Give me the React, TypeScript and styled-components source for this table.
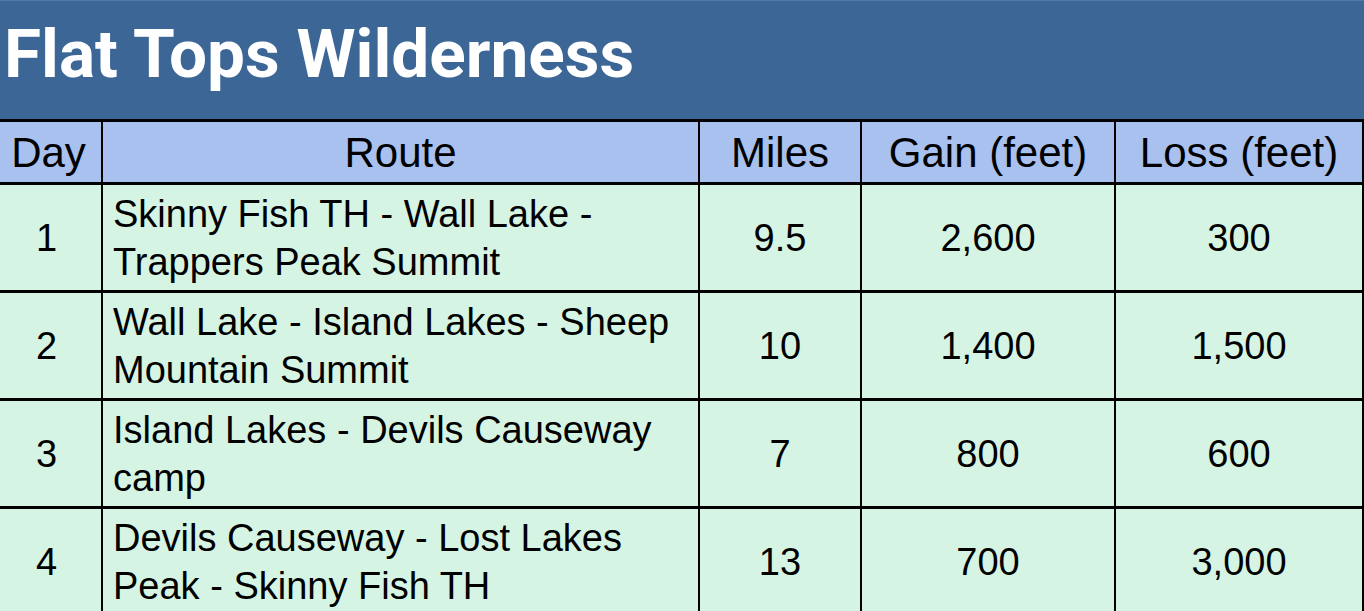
import React from "react";
import styled, { createGlobalStyle } from "styled-components";

const GlobalStyle = createGlobalStyle`
  html, body {
    margin: 0;
    padding: 0;
    background: #ffffff;
    overflow: hidden;
  }
  body {
    font-family: "Liberation Sans", Arial, sans-serif;
  }
`;

const Page = styled.div`
  width: 1364px;
  height: 611px;
  overflow: hidden;
  display: flex;
  flex-direction: column;
`;

const TitleBar = styled.header`
  flex: 0 0 119px;
  height: 119px;
  box-sizing: border-box;
  background: #3b6696;
  border-top: 1px solid #5177a2;
  padding: 20px 0 0 4px;
`;

const Title = styled.h1`
  margin: 0;
  font-family: Roboto, "Liberation Sans", sans-serif;
  font-weight: 700;
  font-size: 67.5px;
  line-height: 66px;
  color: #ffffff;
`;

const Grid = styled.div`
  flex: 0 0 auto;
  display: grid;
  grid-template-columns: 101px 595px 160px 252px 246px;
  grid-template-rows: 60px repeat(4, 105px);
  column-gap: 2px;
  row-gap: 3px;
  padding: 3px 2px 0 0;
  background: #000000;
`;

const HeadCell = styled.div<{ $shift?: number }>`
  background: #a9c1ee;
  display: flex;
  align-items: center;
  justify-content: center;
  font-size: 42px;
  line-height: 48px;
  color: #000;
  padding: 2px ${(p) => p.$shift ?? 0}px 0 0;
`;

const Cell = styled.div<{ $align?: "left" | "center"; $shift?: number }>`
  background: #d6f4e3;
  display: flex;
  align-items: center;
  justify-content: ${(p) => (p.$align === "left" ? "flex-start" : "center")};
  text-align: ${(p) => p.$align ?? "center"};
  padding: ${(p) => (p.$align === "left" ? "2px 8px 0 10px" : `2px ${p.$shift ?? 0}px 0 0`)};
  font-size: 38px;
  line-height: 47.5px;
  color: #000;
`;

const headers = ["Day", "Route", "Miles", "Gain (feet)", "Loss (feet)"];

const rows = [
  { day: "1", route: "Skinny Fish TH - Wall Lake - Trappers Peak Summit", miles: "9.5", gain: "2,600", loss: "300" },
  { day: "2", route: "Wall Lake - Island Lakes - Sheep Mountain Summit", miles: "10", gain: "1,400", loss: "1,500" },
  { day: "3", route: "Island Lakes - Devils Causeway camp", miles: "7", gain: "800", loss: "600" },
  { day: "4", route: "Devils Causeway - Lost Lakes Peak - Skinny Fish TH", miles: "13", gain: "700", loss: "3,000" },
];

export default function App() {
  return (
    <>
      <GlobalStyle />
      <Page>
        <TitleBar>
          <Title>Flat Tops Wilderness</Title>
        </TitleBar>
        <Grid>
          {headers.map((h, i) => (
            <HeadCell key={h} $shift={i === 0 ? 4 : 0}>
              {h}
            </HeadCell>
          ))}
          {rows.map((r) => (
            <React.Fragment key={r.day}>
              <Cell $shift={8}>{r.day}</Cell>
              <Cell $align="left">{r.route}</Cell>
              <Cell>{r.miles}</Cell>
              <Cell>{r.gain}</Cell>
              <Cell>{r.loss}</Cell>
            </React.Fragment>
          ))}
        </Grid>
      </Page>
    </>
  );
}
